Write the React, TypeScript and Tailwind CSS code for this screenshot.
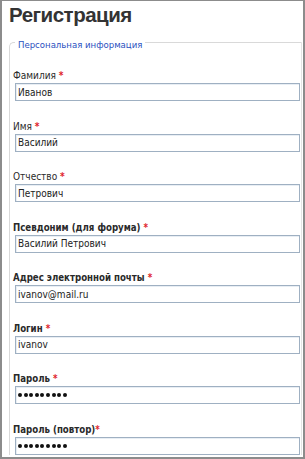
import React from "react";

const fields: { label: string; value: string; password?: boolean; bold?: boolean; tight?: boolean }[] = [
  { label: "Фамилия", value: "Иванов" },
  { label: "Имя", value: "Василий" },
  { label: "Отчество", value: "Петрович" },
  { label: "Псевдоним (для форума)", value: "Василий Петрович", bold: true },
  { label: "Адрес электронной почты", value: "ivanov@mail.ru", bold: true },
  { label: "Логин", value: "ivanov", bold: true },
  { label: "Пароль", value: "", password: true, bold: true },
  { label: "Пароль (повтор)", value: "", password: true, bold: true, tight: true },
];

function Dots() {
  return (
    <div className="flex gap-[1.6px]">
      {Array.from({ length: 9 }).map((_, i) => (
        <span key={i} className="block w-[4px] h-[4px] rounded-full bg-[#111]" />
      ))}
    </div>
  );
}

export default function App() {
  return (
    <div className="w-[305px] h-[459px] overflow-hidden bg-white border-2 border-[#8c8c8c] border-t-[1px] font-['DejaVu_Sans_Condensed','DejaVu_Sans',sans-serif] font-stretch-condensed text-[#333]">
      <div className="pl-[7px] pt-[2px]">
        <h1 className="font-['Liberation_Sans',Arial,sans-serif] font-stretch-normal text-[20.5px] leading-[24px] font-bold text-[#333] tracking-[-0.5px]">
          Регистрация
        </h1>
        <div className="mt-[15px] relative border border-[#d9d9d9] rounded-tl-[5px] border-r-[#e4e4e4] border-b-0 mr-[1px] pl-[3px] pr-[1px] pt-[25px]">
          <div className="absolute left-[5px] top-[-4px] bg-white px-[3px] text-[9.5px] leading-[12px] text-[#2a50c0]">
            Персональная информация
          </div>
          <div className="flex flex-col gap-[17.5px]">
            {fields.map((f) => (
              <div key={f.label} className="flex flex-col">
                <div
                  className={`leading-[15px] h-[15px] ${f.bold ? "font-bold text-[9.6px]" : "text-[10px]"} text-[#2a2a2a]`}
                >
                  {f.label}
                  {f.tight ? "" : " "}
                  <span className="text-[#e0242c] font-bold">*</span>
                </div>
                <div className="ml-[2px] h-[18px] border border-[#9fb0c2] shadow-[inset_1px_1px_0_#e8eef4] bg-white flex items-center pl-[2px] text-[10px] text-[#222]">
                  {f.password ? <Dots /> : f.value}
                </div>
              </div>
            ))}
          </div>
        </div>
      </div>
    </div>
  );
}
